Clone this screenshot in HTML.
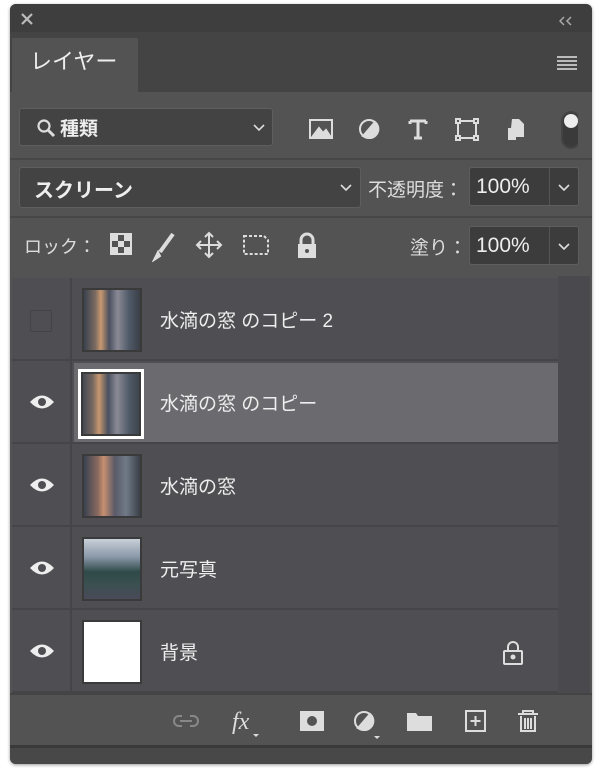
<!DOCTYPE html>
<html><head><meta charset="utf-8"><style>
*{margin:0;padding:0;box-sizing:border-box}
body{width:600px;height:776px;background:#fff;position:relative;overflow:hidden;font-family:"Liberation Sans","Noto Sans CJK JP",sans-serif;color:#e6e6e6}
.a{position:absolute}
.panel{left:10px;top:4px;width:582px;height:760px;background:#535353;border-radius:6px;overflow:hidden;box-shadow:0 1px 3px rgba(0,0,0,.4)}
.box{background:#434343;border:1px solid #5e5e5e;border-radius:3px}
.row{left:2px;width:546px;height:83px;background:#4f4e52;border-bottom:2px solid #454448}
.row .eye{left:0;top:0;width:60px;height:81px;border-right:2px solid #454448}
.thumb{left:70px;top:10px;width:60px;height:64px;border:2px solid #3a3a3a;background:linear-gradient(90deg,#3a4250 0%,#7a6a60 20%,#c89870 30%,#4a5060 45%,#8a8a95 60%,#505a68 80%,#3a4048 100%)}
.name{left:148px;top:28px;font-size:19px;color:#eee}
</style></head><body>
<div class="a panel">
 <div class="a" style="left:0;top:0;width:582px;height:28px;background:#3e3e3e"></div>
 <svg class="a" style="left:10px;top:8px" width="14" height="14" stroke="#bbb" stroke-width="2.2"><path d="M2 2l10 10M12 2L2 12"/></svg>
 <svg class="a" style="left:549px;top:12px" width="16" height="10" fill="none" stroke="#aaa" stroke-width="1.5"><path d="M5 1L1 5l4 4M12 1L8 5l4 4"/></svg>
 <div class="a" style="left:0;top:28px;width:582px;height:60px;background:#444"></div>
 <div class="a" style="left:2px;top:34px;width:126px;height:56px;background:#535353"></div>
 <div class="a" style="left:20px;top:40px;font-size:22px;color:#eee">レイヤー</div>
 <div class="a" style="left:547px;top:52px;width:20px;height:14px;background:repeating-linear-gradient(#bbb 0 2px,transparent 2px 4px)"></div>

 <div class="a box" style="left:9px;top:104px;width:254px;height:38px"></div>
 <svg class="a" style="left:26px;top:114px" width="20" height="20" fill="none" stroke="#ddd" stroke-width="2.2"><circle cx="8" cy="8" r="5.5"/><path d="M12 12l6 6" stroke-width="3"/></svg>
 <div class="a" style="left:50px;top:110px;font-size:19px;color:#eee;font-weight:bold">種類</div>
 <svg class="a" style="left:243px;top:120px" width="12" height="8" fill="none" stroke="#ddd" stroke-width="1.6"><path d="M1 1l5 5 5-5"/></svg>
 <svg class="a" style="left:298px;top:106px" width="270" height="40" viewBox="0 0 270 40" fill="none" stroke="#ddd" stroke-width="2">
  <rect x="2" y="10" width="22" height="18"/><path d="M5 26l6-8 4 5 3-3 4 6z" fill="#ddd"/>
  <circle cx="61" cy="19" r="9"/><path d="M55 26l12-14A9 9 0 0 1 61 28z" fill="#ddd"/>
  <path d="M102 11h16M110 11v17M106 28h8M102 11v3M118 11v3" stroke-width="3"/>
  <rect x="150" y="11" width="18" height="17"/><rect x="148" y="9" width="4" height="4" fill="#535353"/><rect x="166" y="9" width="4" height="4" fill="#535353"/><rect x="148" y="26" width="4" height="4" fill="#535353"/><rect x="166" y="26" width="4" height="4" fill="#535353"/>
  <path d="M204 9h7l5 5v13h-14z" fill="#ddd" stroke="none"/><rect x="200" y="18" width="8" height="12" fill="#ddd" stroke="none"/>
  <rect x="254" y="2" width="18" height="36" rx="9" fill="#3a3a3a" stroke="#444"/><circle cx="263" cy="11" r="7" fill="#eee" stroke="none"/>
 </svg>

 <div class="a" style="left:0;top:154px;width:582px;height:2px;background:#474747"></div>
 <div class="a box" style="left:9px;top:163px;width:342px;height:41px"></div>
 <div class="a" style="left:24px;top:170px;font-size:20px;color:#eee;font-weight:bold">スクリーン</div>
 <svg class="a" style="left:330px;top:180px" width="12" height="8" fill="none" stroke="#ddd" stroke-width="1.6"><path d="M1 1l5 5 5-5"/></svg>
 <div class="a" style="left:358px;top:171px;font-size:19px;color:#ddd">不透明度：</div>
 <div class="a box" style="left:459px;top:163px;width:110px;height:39px;background:#3c3c3c"></div>
 <div class="a" style="left:539px;top:164px;width:1px;height:37px;background:#555"></div>
 <div class="a" style="left:466px;top:171px;font-size:21px;color:#eee">100%</div>
 <svg class="a" style="left:548px;top:180px" width="12" height="8" fill="none" stroke="#ddd" stroke-width="1.6"><path d="M1 1l5 5 5-5"/></svg>

 <div class="a" style="left:0;top:212px;width:582px;height:2px;background:#474747"></div>
 <div class="a" style="left:14px;top:229px;font-size:18px;color:#ddd">ロック：</div>
 <svg class="a" style="left:98px;top:226px" width="210" height="32" viewBox="0 0 210 32" fill="none" stroke="#ddd" stroke-width="2">
  <rect x="3" y="4" width="20" height="20"/><path d="M3 4h7v7H3zM16 4h7v7h-7zM10 11h6v6h-6zM3 17h7v7H3zM16 17h7v7h-7z" fill="#ddd" stroke="none"/>
  <path d="M65 4L52 22" stroke-width="4"/><path d="M50 22l-4 8 6-4z" fill="#ddd"/>
  <path d="M101 4v22M90 15h22"/><path d="M97 7l4-4 4 4M97 23l4 4 4-4M93 11l-4 4 4 4M109 11l4 4-4 4" />
  <path d="M136 6h20l4 4v14h-24z" stroke-dasharray="3 2"/>
  <rect x="190" y="14" width="18" height="14" fill="#ddd" stroke="none"/><path d="M193 14v-4a6 6 0 0 1 12 0v4" stroke-width="3"/><circle cx="199" cy="21" r="2" fill="#535353" stroke="none"/>
 </svg>
 <div class="a" style="left:400px;top:229px;font-size:19px;color:#ddd">塗り：</div>
 <div class="a box" style="left:459px;top:222px;width:110px;height:39px;background:#3c3c3c"></div>
 <div class="a" style="left:539px;top:223px;width:1px;height:37px;background:#555"></div>
 <div class="a" style="left:466px;top:230px;font-size:21px;color:#eee">100%</div>
 <svg class="a" style="left:548px;top:239px" width="12" height="8" fill="none" stroke="#ddd" stroke-width="1.6"><path d="M1 1l5 5 5-5"/></svg>

 <div class="a" style="left:548px;top:272px;width:32px;height:417px;background:#4a494d"></div>
 <div class="a row" style="top:274px"><div class="a eye"><div class="a" style="left:18px;top:32px;width:22px;height:22px;border:1px solid #444;border-radius:2px"></div></div><div class="a thumb"></div><div class="a name">水滴の窓 のコピー 2</div></div>
 <div class="a row" style="top:357px"><div class="a eye"><svg class="a" style="left:16px;top:32px" width="28" height="18"><path d="M2 9Q14-4 26 9Q14 22 2 9z" fill="#eee"/><circle cx="14" cy="9" r="4" fill="#4f4e52"/></svg></div><div class="a" style="left:62px;top:2px;width:484px;height:79px;background:#6b6a6e"></div><div class="a thumb" style="border:3px solid #fff;outline:2px solid #3a3a3a;outline-offset:-5px;left:66px;top:8px;width:66px;height:70px"></div><div class="a name">水滴の窓 のコピー</div></div>
 <div class="a row" style="top:440px"><div class="a eye"><svg class="a" style="left:16px;top:32px" width="28" height="18"><path d="M2 9Q14-4 26 9Q14 22 2 9z" fill="#eee"/><circle cx="14" cy="9" r="4" fill="#4f4e52"/></svg></div><div class="a thumb" style="background:linear-gradient(90deg,#3a4250,#8a6a60 25%,#c89070 35%,#5a5a68 55%,#707a88 75%,#3a4048)"></div><div class="a name">水滴の窓</div></div>
 <div class="a row" style="top:523px"><div class="a eye"><svg class="a" style="left:16px;top:32px" width="28" height="18"><path d="M2 9Q14-4 26 9Q14 22 2 9z" fill="#eee"/><circle cx="14" cy="9" r="4" fill="#4f4e52"/></svg></div><div class="a thumb" style="background:linear-gradient(180deg,#c8d0d8 0%,#8a98a8 30%,#2e4a48 55%,#3a5050 75%,#4a4a58 100%)"></div><div class="a name">元写真</div></div>
 <div class="a row" style="top:606px"><div class="a eye"><svg class="a" style="left:16px;top:32px" width="28" height="18"><path d="M2 9Q14-4 26 9Q14 22 2 9z" fill="#eee"/><circle cx="14" cy="9" r="4" fill="#4f4e52"/></svg></div><div class="a thumb" style="background:#fff"></div><div class="a name">背景</div>
  <svg class="a" style="left:490px;top:30px" width="22" height="26" fill="none" stroke="#ddd" stroke-width="2"><rect x="2" y="11" width="18" height="13" rx="1"/><path d="M6 11V7a5 5 0 0 1 10 0v4"/><circle cx="11" cy="17" r="1.5" fill="#ddd"/></svg></div>

 <div class="a" style="left:0;top:689px;width:582px;height:2px;background:#444"></div>
 <svg class="a" style="left:160px;top:698px" width="380" height="40" fill="none" stroke="#ddd" stroke-width="2">
  <path d="M12 14h-3a5 5 0 0 0 0 10h3M20 14h3a5 5 0 0 1 0 10h-3M10 19h12" stroke="#888"/>
  <text x="62" y="27" font-family="Liberation Serif,serif" font-style="italic" font-size="24" fill="#ddd" stroke="none">fx</text><path d="M83 32h6l-3 3z" fill="#ddd" stroke="none"/>
  <rect x="130" y="9" width="24" height="20" fill="#ddd" stroke="none"/><circle cx="142" cy="19" r="5" fill="#535353" stroke="none"/>
  <circle cx="194" cy="19" r="9"/><path d="M188 26l12-14A9 9 0 0 1 194 28z" fill="#ddd"/><path d="M204 34h6l-3 3z" fill="#ddd" stroke="none"/>
  <path d="M237 11h9l2 3h14v15h-25z" fill="#ddd" stroke="none"/>
  <rect x="296" y="9" width="19" height="20"/><path d="M305.5 14v10M300.5 19h10"/>
  <path d="M348 12h20M353 12v-3h10v3M351 14v15h14V14M355 16v11M358 16v11M361 16v11"/>
 </svg>
 <div class="a" style="left:0;top:741px;width:582px;height:3px;background:#3a3a3a"></div>
 <div class="a" style="left:0;top:744px;width:582px;height:18px;background:#484848"></div>
</div>
</body></html>
